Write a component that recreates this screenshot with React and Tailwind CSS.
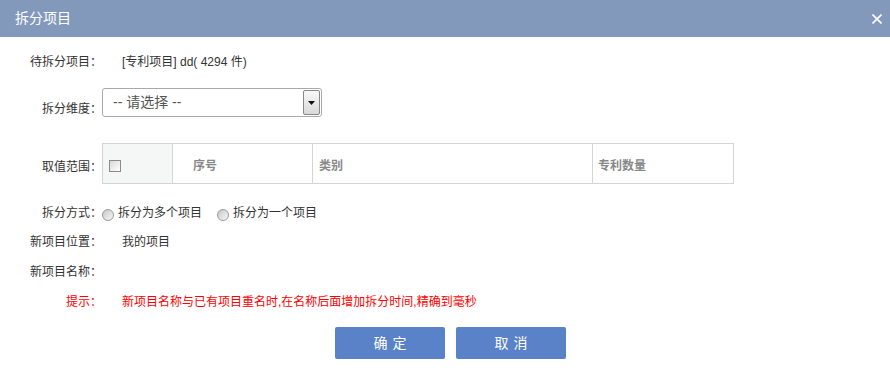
export default function App() {
  const font = { fontFamily: '"Liberation Sans", "Noto Sans CJK SC", sans-serif' };
  return (
    <div className="w-[890px] h-[374px] bg-white text-[12px] text-[#333] overflow-hidden" style={font}>
      <div className="h-[37px] bg-[#8399bb] flex items-center justify-between pl-[15px] pr-[8px]">
        <span className="text-white text-[14px]">拆分项目</span>
        <svg width="10" height="10" viewBox="0 0 10 10" className="mr-[0px]">
          <path d="M0.5 0.5 L9.5 9.5 M9.5 0.5 L0.5 9.5" stroke="white" strokeWidth="1.6" />
        </svg>
      </div>

      <div className="flex flex-col">
        <div className="mt-[13px] h-[24px] flex items-center">
          <div className="w-[102px] text-right">待拆分项目：</div>
          <div className="pl-[20px]">[专利项目] dd( 4294 件)</div>
        </div>

        <div className="mt-[14px] h-[29px] flex items-end">
          <div className="w-[102px] text-right leading-[14px] mb-[1px]">拆分维度：</div>
          <div className="w-[220px] h-[29px] border border-[#a9a9a9] rounded-[3px] flex items-center justify-between">
            <span className="pl-[10px] text-[14px] text-[#555]">-- 请选择 --</span>
            <div className="w-[17px] h-[25px] mr-[1px] border border-[#888] rounded-[2px] bg-gradient-to-b from-[#fafafa] to-[#d8d8d8] flex items-center justify-center">
              <svg width="7" height="4" viewBox="0 0 7 4"><path d="M0 0 L7 0 L3.5 4 Z" fill="#111" /></svg>
            </div>
          </div>
        </div>

        <div className="mt-[26px] flex items-center">
          <div className="w-[102px] text-right mt-[6px]">取值范围：</div>
          <div className="flex h-[41px] border border-[#d4d4d4] text-[#888] font-bold">
            <div className="w-[70px] bg-[#f5f6f6] border-r border-[#d4d4d4] flex items-center pl-[6px]">
              <div className="w-[12px] h-[12px] border border-[#8a8a8a] bg-gradient-to-br from-[#d8d8d8] to-[#ffffff] mt-[4px]" />
            </div>
            <div className="w-[140px] border-r border-[#d4d4d4] flex items-center pl-[20px] mt-[0px]"><span className="mt-[4px]">序号</span></div>
            <div className="w-[280px] border-r border-[#d4d4d4] flex items-center pl-[6px]"><span className="mt-[4px]">类别</span></div>
            <div className="w-[140px] flex items-center pl-[5px]"><span className="mt-[4px]">专利数量</span></div>
          </div>
        </div>

        <div className="mt-[17px] h-[24px] flex items-center">
          <div className="w-[102px] text-right">拆分方式：</div>
          <div className="flex items-center">
            <span className="w-[12px] h-[12px] rounded-full border border-[#999] bg-gradient-to-br from-[#c8c8c8] to-[#f8f8f8] mt-[3px]" />
            <span className="ml-[4px]">拆分为多个项目</span>
            <span className="ml-[15px] w-[12px] h-[12px] rounded-full border border-[#999] bg-gradient-to-br from-[#c8c8c8] to-[#f8f8f8] mt-[3px]" />
            <span className="ml-[4px]">拆分为一个项目</span>
          </div>
        </div>

        <div className="mt-[5px] h-[24px] flex items-center">
          <div className="w-[102px] text-right">新项目位置：</div>
          <div className="pl-[20px]">我的项目</div>
        </div>

        <div className="mt-[6px] h-[24px] flex items-center">
          <div className="w-[102px] text-right">新项目名称：</div>
        </div>

        <div className="mt-[6px] h-[24px] flex items-center text-[#ff0000]">
          <div className="w-[102px] text-right">提示：</div>
          <div className="pl-[20px]">新项目名称与已有项目重名时,在名称后面增加拆分时间,精确到毫秒</div>
        </div>

        <div className="mt-[13px] flex justify-center gap-[11px] pl-[11px]">
          <button className="w-[110px] h-[32px] bg-[#5a82c8] rounded-[2px] text-white text-[14px] tracking-[5px] pl-[5px]">确定</button>
          <button className="w-[110px] h-[32px] bg-[#5a82c8] rounded-[2px] text-white text-[14px] tracking-[5px] pl-[5px]">取消</button>
        </div>
      </div>
    </div>
  );
}
